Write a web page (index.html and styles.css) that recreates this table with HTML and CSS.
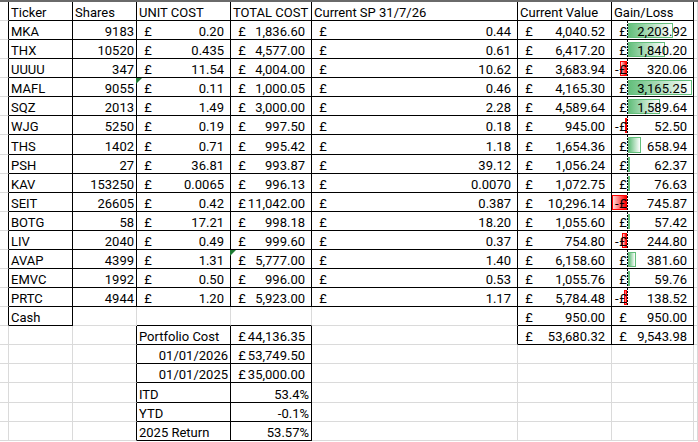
FILE: index.html
```html
<!DOCTYPE html>
<html>
<head>
<meta charset="utf-8">
<link rel="stylesheet" href="styles.css">
</head>
<body>
<div class="topbar"></div>
<div class="sheet">
  <div class="row hdr">
    <div class="c br"></div>
    <div class="c br bb tx">Ticker</div>
    <div class="c br bb tx">Shares</div>
    <div class="c br bb tx">UNIT COST</div>
    <div class="c br bb tx">TOTAL COST</div>
    <div class="c br bb tx">Current SP 31/7/26</div>
    <div class="c br bb tx">Current Value</div>
    <div class="c br bb tx">Gain/Loss</div>
    <div class="c"></div>
  </div>

  <div class="row">
    <div class="c br"></div>
    <div class="c br bb tx">MKA</div>
    <div class="c br bb num">9183</div>
    <div class="c br bb acc"><span><i class="sg"></i>£</span><span>0.20</span></div>
    <div class="c br bb acc"><span><i class="sg"></i>£</span><span>1,836.60</span></div>
    <div class="c br bb acc"><span><i class="sg"></i>£</span><span>0.44</span></div>
    <div class="c br bb acc"><span><i class="sg"></i>£</span><span>4,040.52</span></div>
    <div class="c br bb acc db"><span class="bar pos" style="--w:44.6px"></span><span><i class="sg"></i>£</span><span>2,203.92</span></div>
    <div class="c"></div>
  </div>

  <div class="row">
    <div class="c br"></div>
    <div class="c br bb tx">THX</div>
    <div class="c br bb num">10520</div>
    <div class="c br bb acc"><span><i class="sg"></i>£</span><span>0.435</span></div>
    <div class="c br bb acc"><span><i class="sg"></i>£</span><span>4,577.00</span></div>
    <div class="c br bb acc"><span><i class="sg"></i>£</span><span>0.61</span></div>
    <div class="c br bb acc"><span><i class="sg"></i>£</span><span>6,417.20</span></div>
    <div class="c br bb acc db"><span class="bar pos" style="--w:37.2px"></span><span><i class="sg"></i>£</span><span>1,840.20</span></div>
    <div class="c"></div>
  </div>

  <div class="row">
    <div class="c br"></div>
    <div class="c br bb tx">UUUU</div>
    <div class="c br bb num">347</div>
    <div class="c br bb acc"><span><i class="sg"></i>£</span><span>11.54</span></div>
    <div class="c br bb acc"><span><i class="sg"></i>£</span><span>4,004.00</span></div>
    <div class="c br bb acc"><span><i class="sg"></i>£</span><span>10.62</span></div>
    <div class="c br bb acc"><span><i class="sg"></i>£</span><span>3,683.94</span></div>
    <div class="c br bb acc db"><span class="bar neg" style="--w:6.8px"></span><span><i class="sg">-</i>£</span><span>320.06</span></div>
    <div class="c"></div>
  </div>

  <div class="row">
    <div class="c br"></div>
    <div class="c br bb tx">MAFL</div>
    <div class="c br bb num">9055</div>
    <div class="c br bb acc err"><span><i class="sg"></i>£</span><span>0.11</span></div>
    <div class="c br bb acc"><span><i class="sg"></i>£</span><span>1,000.05</span></div>
    <div class="c br bb acc"><span><i class="sg"></i>£</span><span>0.46</span></div>
    <div class="c br bb acc"><span><i class="sg"></i>£</span><span>4,165.30</span></div>
    <div class="c br bb acc db"><span class="bar pos" style="--w:64px"></span><span><i class="sg"></i>£</span><span>3,165.25</span></div>
    <div class="c"></div>
  </div>

  <div class="row">
    <div class="c br"></div>
    <div class="c br bb tx">SQZ</div>
    <div class="c br bb num">2013</div>
    <div class="c br bb acc"><span><i class="sg"></i>£</span><span>1.49</span></div>
    <div class="c br bb acc"><span><i class="sg"></i>£</span><span>3,000.00</span></div>
    <div class="c br bb acc"><span><i class="sg"></i>£</span><span>2.28</span></div>
    <div class="c br bb acc"><span><i class="sg"></i>£</span><span>4,589.64</span></div>
    <div class="c br bb acc db"><span class="bar pos" style="--w:32.1px"></span><span><i class="sg"></i>£</span><span>1,589.64</span></div>
    <div class="c"></div>
  </div>

  <div class="row">
    <div class="c br"></div>
    <div class="c br bb tx">WJG</div>
    <div class="c br bb num">5250</div>
    <div class="c br bb acc"><span><i class="sg"></i>£</span><span>0.19</span></div>
    <div class="c br bb acc"><span><i class="sg"></i>£</span><span>997.50</span></div>
    <div class="c br bb acc"><span><i class="sg"></i>£</span><span>0.18</span></div>
    <div class="c br bb acc"><span><i class="sg"></i>£</span><span>945.00</span></div>
    <div class="c br bb acc db"><span class="bar neg" style="--w:1.2px"></span><span><i class="sg">-</i>£</span><span>52.50</span></div>
    <div class="c"></div>
  </div>

  <div class="row">
    <div class="c br"></div>
    <div class="c br bb tx">THS</div>
    <div class="c br bb num">1402</div>
    <div class="c br bb acc"><span><i class="sg"></i>£</span><span>0.71</span></div>
    <div class="c br bb acc"><span><i class="sg"></i>£</span><span>995.42</span></div>
    <div class="c br bb acc"><span><i class="sg"></i>£</span><span>1.18</span></div>
    <div class="c br bb acc"><span><i class="sg"></i>£</span><span>1,654.36</span></div>
    <div class="c br bb acc db"><span class="bar pos" style="--w:13.3px"></span><span><i class="sg"></i>£</span><span>658.94</span></div>
    <div class="c"></div>
  </div>

  <div class="row">
    <div class="c br"></div>
    <div class="c br bb tx">PSH</div>
    <div class="c br bb num">27</div>
    <div class="c br bb acc"><span><i class="sg"></i>£</span><span>36.81</span></div>
    <div class="c br bb acc"><span><i class="sg"></i>£</span><span>993.87</span></div>
    <div class="c br bb acc"><span><i class="sg"></i>£</span><span>39.12</span></div>
    <div class="c br bb acc"><span><i class="sg"></i>£</span><span>1,056.24</span></div>
    <div class="c br bb acc db"><span class="bar pos" style="--w:1.3px"></span><span><i class="sg"></i>£</span><span>62.37</span></div>
    <div class="c"></div>
  </div>

  <div class="row">
    <div class="c br"></div>
    <div class="c br bb tx">KAV</div>
    <div class="c br bb num">153250</div>
    <div class="c br bb acc"><span><i class="sg"></i>£</span><span>0.0065</span></div>
    <div class="c br bb acc"><span><i class="sg"></i>£</span><span>996.13</span></div>
    <div class="c br bb acc"><span><i class="sg"></i>£</span><span>0.0070</span></div>
    <div class="c br bb acc"><span><i class="sg"></i>£</span><span>1,072.75</span></div>
    <div class="c br bb acc db"><span class="bar pos" style="--w:1.6px"></span><span><i class="sg"></i>£</span><span>76.63</span></div>
    <div class="c"></div>
  </div>

  <div class="row">
    <div class="c br"></div>
    <div class="c br bb tx">SEIT</div>
    <div class="c br bb num">26605</div>
    <div class="c br bb acc"><span><i class="sg"></i>£</span><span>0.42</span></div>
    <div class="c br bb acc"><span><i class="sg"></i>£</span><span>11,042.00</span></div>
    <div class="c br bb acc"><span><i class="sg"></i>£</span><span>0.387</span></div>
    <div class="c br bb acc"><span><i class="sg"></i>£</span><span>10,296.14</span></div>
    <div class="c br bb acc db"><span class="bar neg" style="--w:15.3px"></span><span><i class="sg">-</i>£</span><span>745.87</span></div>
    <div class="c"></div>
  </div>

  <div class="row">
    <div class="c br"></div>
    <div class="c br bb tx">BOTG</div>
    <div class="c br bb num">58</div>
    <div class="c br bb acc"><span><i class="sg"></i>£</span><span>17.21</span></div>
    <div class="c br bb acc"><span><i class="sg"></i>£</span><span>998.18</span></div>
    <div class="c br bb acc"><span><i class="sg"></i>£</span><span>18.20</span></div>
    <div class="c br bb acc"><span><i class="sg"></i>£</span><span>1,055.60</span></div>
    <div class="c br bb acc db"><span class="bar pos" style="--w:1.2px"></span><span><i class="sg"></i>£</span><span>57.42</span></div>
    <div class="c"></div>
  </div>

  <div class="row">
    <div class="c br"></div>
    <div class="c br bb tx">LIV</div>
    <div class="c br bb num">2040</div>
    <div class="c br bb acc"><span><i class="sg"></i>£</span><span>0.49</span></div>
    <div class="c br bb acc"><span><i class="sg"></i>£</span><span>999.60</span></div>
    <div class="c br bb acc"><span><i class="sg"></i>£</span><span>0.37</span></div>
    <div class="c br bb acc"><span><i class="sg"></i>£</span><span>754.80</span></div>
    <div class="c br bb acc db"><span class="bar neg" style="--w:5.4px"></span><span><i class="sg">-</i>£</span><span>244.80</span></div>
    <div class="c"></div>
  </div>

  <div class="row">
    <div class="c br"></div>
    <div class="c br bb tx">AVAP</div>
    <div class="c br bb num">4399</div>
    <div class="c br bb acc"><span><i class="sg"></i>£</span><span>1.31</span></div>
    <div class="c br bb acc err"><span><i class="sg"></i>£</span><span>5,777.00</span></div>
    <div class="c br bb acc"><span><i class="sg"></i>£</span><span>1.40</span></div>
    <div class="c br bb acc"><span><i class="sg"></i>£</span><span>6,158.60</span></div>
    <div class="c br bb acc db"><span class="bar pos" style="--w:7.7px"></span><span><i class="sg"></i>£</span><span>381.60</span></div>
    <div class="c"></div>
  </div>

  <div class="row">
    <div class="c br"></div>
    <div class="c br bb tx">EMVC</div>
    <div class="c br bb num">1992</div>
    <div class="c br bb acc"><span><i class="sg"></i>£</span><span>0.50</span></div>
    <div class="c br bb acc"><span><i class="sg"></i>£</span><span>996.00</span></div>
    <div class="c br bb acc"><span><i class="sg"></i>£</span><span>0.53</span></div>
    <div class="c br bb acc"><span><i class="sg"></i>£</span><span>1,055.76</span></div>
    <div class="c br bb acc db"><span class="bar pos" style="--w:1.2px"></span><span><i class="sg"></i>£</span><span>59.76</span></div>
    <div class="c"></div>
  </div>

  <div class="row">
    <div class="c br"></div>
    <div class="c br bb tx">PRTC</div>
    <div class="c br bb num">4944</div>
    <div class="c br bb acc"><span><i class="sg"></i>£</span><span>1.20</span></div>
    <div class="c br bb acc"><span><i class="sg"></i>£</span><span>5,923.00</span></div>
    <div class="c br bb acc"><span><i class="sg"></i>£</span><span>1.17</span></div>
    <div class="c br bb acc"><span><i class="sg"></i>£</span><span>5,784.48</span></div>
    <div class="c br bb acc db"><span class="bar neg" style="--w:3.2px"></span><span><i class="sg">-</i>£</span><span>138.52</span></div>
    <div class="c"></div>
  </div>

  <div class="row">
    <div class="c br"></div>
    <div class="c br bb tx">Cash</div>
    <div class="c"></div>
    <div class="c bb"></div>
    <div class="c bb"></div>
    <div class="c br"></div>
    <div class="c br bb acc"><span><i class="sg"></i>£</span><span>950.00</span></div>
    <div class="c br bb acc"><span><i class="sg"></i>£</span><span>950.00</span></div>
    <div class="c"></div>
  </div>

  <div class="row">
    <div class="c"></div>
    <div class="c"></div>
    <div class="c br"></div>
    <div class="c br bb tx">Portfolio Cost</div>
    <div class="c br bb acc"><span><i class="sg"></i>£</span><span>44,136.35</span></div>
    <div class="c br"></div>
    <div class="c br bb acc"><span><i class="sg"></i>£</span><span>53,680.32</span></div>
    <div class="c br bb acc"><span><i class="sg"></i>£</span><span>9,543.98</span></div>
    <div class="c"></div>
  </div>

  <div class="row">
    <div class="c"></div>
    <div class="c"></div>
    <div class="c br"></div>
    <div class="c br bb num">01/01/2026</div>
    <div class="c br bb acc"><span><i class="sg"></i>£</span><span>53,749.50</span></div>
    <div class="c"></div>
    <div class="c"></div>
    <div class="c"></div>
    <div class="c"></div>
  </div>

  <div class="row">
    <div class="c"></div>
    <div class="c"></div>
    <div class="c br"></div>
    <div class="c br bb num">01/01/2025</div>
    <div class="c br bb acc"><span><i class="sg"></i>£</span><span>35,000.00</span></div>
    <div class="c"></div>
    <div class="c"></div>
    <div class="c"></div>
    <div class="c"></div>
  </div>

  <div class="row">
    <div class="c"></div>
    <div class="c"></div>
    <div class="c br"></div>
    <div class="c br bb tx">ITD</div>
    <div class="c br bb num">53.4%</div>
    <div class="c"></div>
    <div class="c"></div>
    <div class="c"></div>
    <div class="c"></div>
  </div>

  <div class="row">
    <div class="c"></div>
    <div class="c"></div>
    <div class="c br"></div>
    <div class="c br bb tx">YTD</div>
    <div class="c br bb num">-0.1%</div>
    <div class="c"></div>
    <div class="c"></div>
    <div class="c"></div>
    <div class="c"></div>
  </div>

  <div class="row">
    <div class="c"></div>
    <div class="c"></div>
    <div class="c br"></div>
    <div class="c br bb tx">2025 Return</div>
    <div class="c br bb num">53.57%</div>
    <div class="c"></div>
    <div class="c"></div>
    <div class="c"></div>
    <div class="c"></div>
  </div>
</div>
</body>
</html>
```

FILE: styles.css
```css
html, body {
  margin: 0;
  padding: 0;
  background: #ffffff;
}

body {
  font-family: Roboto, "Liberation Sans", Arial, sans-serif;
  font-size: 13px;
  color: #000000;
  overflow: hidden;
  width: 698px;
  height: 442px;
}

.topbar {
  height: 2px;
  background: #6a6a6a;
}

.sheet {
  display: block;
}

.row {
  display: grid;
  grid-template-columns: 9px 64px 64px 94px 81px 206px 94px 82px 1fr;
  height: 19.09px;
}

.row.hdr {
  height: 19px;
}

.c {
  box-sizing: border-box;
  border-right: 1px solid #dadada;
  border-bottom: 1px solid #dadada;
  display: flex;
  align-items: flex-end;
  line-height: 15px;
  white-space: nowrap;
  min-width: 0;
  position: relative;
}

.br {
  border-right-color: #000000;
}

.bb {
  border-bottom-color: #000000;
}

.tx {
  padding-left: 2px;
}

.num {
  justify-content: flex-end;
  padding-right: 2px;
}

.acc {
  justify-content: space-between;
  padding: 0 6px 0 3px;
}

.acc > span {
  position: relative;
}

.sg {
  font-style: normal;
  display: inline-block;
  width: 4.3px;
}

/* data bar column */
.db::before {
  content: "";
  position: absolute;
  left: 15px;
  top: 0;
  bottom: 0;
  width: 1px;
  background: repeating-linear-gradient(to bottom, #000000 0, #000000 2px, transparent 2px, transparent 3px);
}

.acc > .bar {
  position: absolute;
  top: 2px;
  bottom: 1px;
  width: var(--w);
  box-sizing: border-box;
}

.bar.pos {
  left: 16px;
  border: 1px solid #63be7b;
  background: linear-gradient(to right, #63be7b, #ffffff);
}

.bar.neg {
  right: calc(100% - 15px);
  border: 1px solid #ff0000;
  background: linear-gradient(to left, #ff0000, #ffd6d6);
}

/* error indicator triangle */
.err::after {
  content: "";
  position: absolute;
  left: -1px;
  top: 0;
  width: 0;
  height: 0;
  border-top: 6px solid #1e7b34;
  border-right: 6px solid transparent;
}
```
